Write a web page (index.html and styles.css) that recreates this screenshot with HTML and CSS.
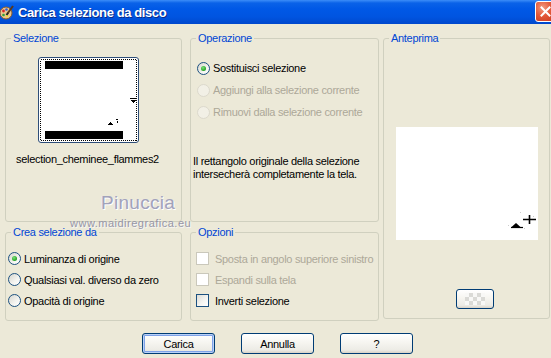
FILE: index.html
```html
<!DOCTYPE html>
<html lang="it">
<head>
    <meta charset="UTF-8">
    <meta name="viewport" content="width=device-width, initial-scale=1.0">
    <title>Carica selezione da disco</title>
    <link rel="stylesheet" href="styles.css">
</head>
<body>

<div class="window">
    <div class="titlebar">
        <svg class="app-icon" width="14" height="15" viewBox="0 0 14 15">
            <ellipse cx="6" cy="8" rx="6" ry="6" fill="#E9C48C" stroke="#8A5A2A" stroke-width="1"/>
            <circle cx="3.5" cy="6" r="1.4" fill="#D8262A"/>
            <circle cx="6.5" cy="4.5" r="1.3" fill="#2A5FD8"/>
            <circle cx="3.5" cy="10" r="1.3" fill="#2FA33A"/>
            <circle cx="7" cy="11" r="1.2" fill="#F0E040"/>
            <path d="M13 1 L7.5 8.5" stroke="#5B3A1A" stroke-width="2"/>
            <path d="M8 8 L6.5 10" stroke="#222" stroke-width="2"/>
        </svg>
        <span class="title">Carica selezione da disco</span>
        <span class="close">
            <svg width="11" height="11" viewBox="0 0 11 11">
                <path d="M1.5 1.5 L9.5 9.5 M9.5 1.5 L1.5 9.5" stroke="#fff" stroke-width="2" stroke-linecap="square"/>
            </svg>
        </span>
    </div>

    <div class="panels">
        <fieldset class="group group-sel">
            <legend>Selezione</legend>
            <div class="thumb">
                <svg width="99" height="84" viewBox="0 0 99 84">
                    <rect x="1.5" y="1.5" width="96" height="81" fill="none" stroke="#000" stroke-dasharray="1 1"/>
                    <rect x="6" y="3" width="78" height="8" fill="#000"/>
                    <rect x="6" y="73" width="78" height="8" fill="#000"/>
                    <path d="M91 40.5 H97" stroke="#000" stroke-width="1"/>
                    <path d="M92 42 H97 L94.5 45 Z" fill="#000"/>
                    <path d="M69 67 L71.5 63.5 L74 67 Z" fill="#000"/>
                    <rect x="77" y="61" width="2" height="1" fill="#000"/>
                    <rect x="78" y="63" width="1" height="2" fill="#000"/>
                </svg>
            </div>
            <div class="thumb-name">selection_cheminee_flammes2</div>
        </fieldset>

        <fieldset class="group group-op">
            <legend>Operazione</legend>
            <div class="opt first"><span class="radio checked"></span>Sostituisci selezione</div>
            <div class="opt disabled"><span class="radio"></span>Aggiungi alla selezione corrente</div>
            <div class="opt disabled"><span class="radio"></span>Rimuovi dalla selezione corrente</div>
            <p class="note">Il rettangolo originale della selezione<br>intersecherà completamente la tela.</p>
        </fieldset>

        <fieldset class="group group-preview">
            <legend>Anteprima</legend>
            <div class="preview">
                <svg width="142" height="113" viewBox="0 0 142 113">
                    <path d="M127 92.5 H140 M133.5 88 V97" stroke="#000" stroke-width="1.6"/>
                    <path d="M115 100.5 L120 96 L125 100.5 Z" fill="#000"/>
                    <path d="M115 100.5 H127" stroke="#000" stroke-width="1.2"/>
                    <rect x="124" y="85" width="1" height="1" fill="#ccc"/>
                    <rect x="137" y="89" width="1" height="1" fill="#ccc"/>
                    <rect x="112" y="98" width="1" height="1" fill="#ccc"/>
                    <rect x="128" y="101" width="1" height="1" fill="#ccc"/>
                </svg>
            </div>
            <button class="btn btn-small" type="button"><span class="checker"></span></button>
        </fieldset>

        <fieldset class="group group-crea">
            <legend>Crea selezione da</legend>
            <div class="opt first"><span class="radio checked"></span>Luminanza di origine</div>
            <div class="opt"><span class="radio"></span>Qualsiasi val. diverso da zero</div>
            <div class="opt"><span class="radio"></span>Opacità di origine</div>
        </fieldset>

        <fieldset class="group group-opz">
            <legend>Opzioni</legend>
            <div class="opt first disabled"><span class="check"></span>Sposta in angolo superiore sinistro</div>
            <div class="opt disabled"><span class="check"></span>Espandi sulla tela</div>
            <div class="opt"><span class="check"></span>Inverti selezione</div>
        </fieldset>
    </div>

    <div class="actions">
        <button class="btn btn-default" type="button">Carica</button>
        <button class="btn" type="button">Annulla</button>
        <button class="btn" type="button">?</button>
    </div>

    <!-- watermark stamped over the dialog -->
    <div class="wm-name">Pinuccia</div>
    <div class="wm-site">www.maidiregrafica.eu</div>
</div>

</body>
</html>
```

FILE: styles.css
```css
/* Dialog base */
body {
    margin: 0;
    background-color: #ECE9D8;
    font-family: "Liberation Sans", Arial, sans-serif;
    font-size: 11px;
    letter-spacing: -0.3px;
    color: #000;
}
.window {
    position: relative;
    width: 551px;
    height: 358px;
    overflow: hidden;
}

/* Title bar */
.titlebar {
    display: flex;
    align-items: center;
    height: 24px;
    background: linear-gradient(to bottom, #3C8DF8 0, #0A62E8 3px, #0058E6 9px, #0054E0 17px, #0048CC 24px);
    color: #fff;
}
.app-icon {
    flex: none;
    margin-top: 1px;
}
.title {
    flex: 1;
    margin-left: 4px;
    font-weight: bold;
    font-size: 13px;
    letter-spacing: -0.4px;
    text-shadow: 1px 1px 0 #0A2C8A;
}
.close {
    display: flex;
    align-items: center;
    justify-content: center;
    box-sizing: border-box;
    width: 21px;
    height: 21px;
    margin-right: -5px;
    margin-top: -1px;
    border: 1px solid #fff;
    border-radius: 3px;
    background: radial-gradient(circle at 35% 30%, #F39A80 0, #E3593A 45%, #C9381C 100%);
}

/* Group boxes */
.panels {
    display: grid;
    grid-template-columns: 177px 8px 189px 4px 167px;
    grid-template-rows: 190px 95px;
    row-gap: 4px;
    padding: 8px 0 0 5px;
}
.group {
    margin: 0;
    padding: 0;
    min-width: 0;
    border: 1px solid #D0D0BF;
    border-radius: 3px;
}
.group legend {
    margin-left: 5px;
    padding: 0 2px;
    line-height: 13px;
    color: #0046D5;
}
.group-sel { grid-column: 1; grid-row: 1; }
.group-op { grid-column: 3; grid-row: 1; }
.group-preview {
    grid-column: 5;
    grid-row: 1 / 3;
    align-self: start;
    height: 287px;
    box-sizing: border-box;
}
.group-crea { grid-column: 1; grid-row: 2; }
.group-opz { grid-column: 3; grid-row: 2; }

/* Selection thumbnail */
.thumb {
    box-sizing: border-box;
    width: 101px;
    height: 86px;
    margin: 12px 0 0 32px;
    border: 1px solid #2E4E78;
    border-radius: 3px;
    background-color: #fff;
}
.thumb svg {
    display: block;
    shape-rendering: crispEdges;
}
.thumb-name {
    margin: 10px 0 0 10px;
    line-height: 13px;
}

/* Radio and check rows */
.opt {
    display: flex;
    align-items: center;
    gap: 3px;
    height: 22px;
    white-space: nowrap;
}
.group-op .opt { padding-left: 6px; }
.group-op .opt.first { margin-top: 12px; }
.group-crea .opt,
.group-opz .opt { height: 21px; }
.group-crea .opt { padding-left: 2px; }
.group-crea .opt.first,
.group-opz .opt.first { margin-top: 9px; }
.group-opz .opt { padding-left: 5px; }

.radio {
    position: relative;
    flex: none;
    box-sizing: border-box;
    width: 13px;
    height: 13px;
    border: 1px solid #1C5180;
    border-radius: 50%;
    background: linear-gradient(135deg, #D6D5CE 0, #F4F4F0 60%, #fff 100%);
}
.radio.checked::after {
    content: "";
    position: absolute;
    left: 3px;
    top: 3px;
    width: 5px;
    height: 5px;
    border-radius: 50%;
    background: radial-gradient(circle at 40% 35%, #7DE07A 0, #21A121 70%);
}
.check {
    flex: none;
    box-sizing: border-box;
    width: 13px;
    height: 13px;
    margin-right: 3px;
    border: 1px solid #1C5180;
    background: linear-gradient(135deg, #DCDCD7 0, #F6F6F3 60%, #fff 100%);
}
.opt.disabled { color: #ACA899; }
.opt.disabled .radio {
    border-color: #DCD9CC;
    background: #F2F0E6;
}
.opt.disabled .check {
    border-color: #CAC8BB;
    background: #fff;
}
.note {
    margin: 32px 0 0 2px;
    line-height: 13px;
}

/* Preview */
.preview {
    width: 142px;
    height: 113px;
    margin: 82px 0 0 12px;
    background-color: #fff;
}
.preview svg { display: block; }

/* Buttons */
.btn {
    box-sizing: border-box;
    width: 73px;
    height: 21px;
    padding: 0;
    border: 1px solid #003C74;
    border-radius: 3px;
    background: linear-gradient(to bottom, #FFFFFF 0, #F6F5F0 45%, #ECEBE5 85%, #D8D2C6 100%);
    font-family: "Liberation Sans", Arial, sans-serif;
    font-size: 11px;
    letter-spacing: -0.3px;
    color: #000;
}
.btn-default {
    box-shadow: inset 0 0 0 1px #B9D1F7, inset 0 0 0 2px #7FA2E8;
}
.btn-small {
    display: flex;
    align-items: center;
    justify-content: center;
    width: 38px;
    height: 20px;
    margin: 49px 0 0 72px;
}
.checker {
    width: 20px;
    height: 12px;
    background: repeating-conic-gradient(#DADAD6 0 25%, #F8F8F6 0 50%) 0 0 / 8px 8px;
}
.actions {
    display: flex;
    gap: 26px;
    margin-top: 12px;
    padding-left: 142px;
}

/* Watermark */
.wm-name {
    position: absolute;
    left: 101px;
    top: 192px;
    font-size: 19px;
    letter-spacing: 0.3px;
    color: #A2A2BA;
    text-shadow: 1px 1px 0 #fff, -1px 0 0 #E8E8F0;
}
.wm-site {
    position: absolute;
    left: 70px;
    top: 217px;
    font-size: 11px;
    letter-spacing: 0.5px;
    color: #9696A6;
    text-shadow: 1px 1px 0 #F6F6F6;
}
```
